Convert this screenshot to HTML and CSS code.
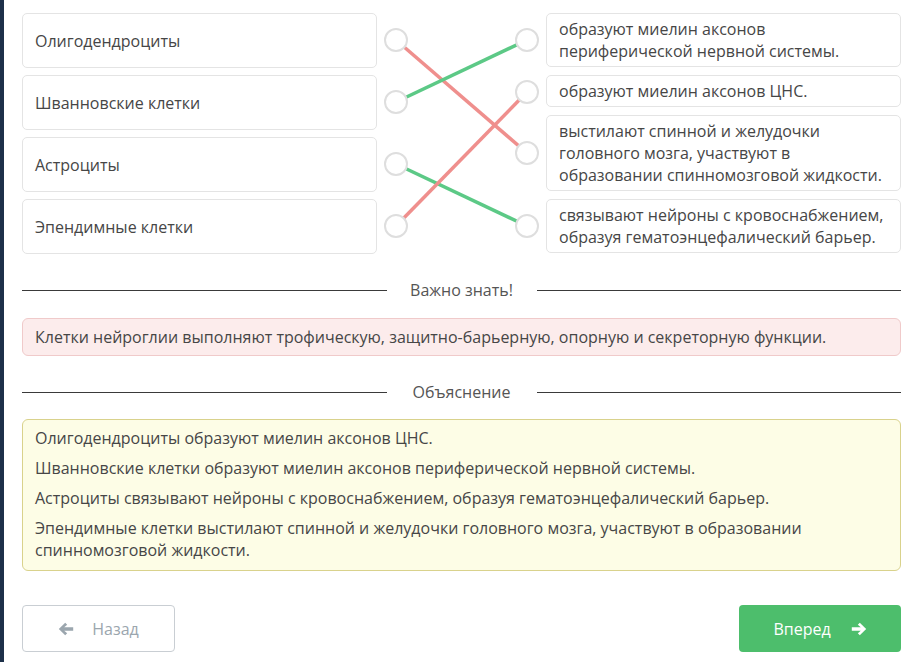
FILE: index.html
```html
<!DOCTYPE html>
<html lang="ru">
<head>
  <meta charset="UTF-8" />
  <meta name="viewport" content="width=device-width, initial-scale=1.0" />
  <title>Нейроглия</title>
  <link rel="stylesheet" href="styles.css">
</head>
<body>
  <div id="page">
    <div id="matchArea">
      <div class="column left-col">
        <div class="item">Олигодендроциты</div>
        <div class="item">Шванновские клетки</div>
        <div class="item">Астроциты</div>
        <div class="item">Эпендимные клетки</div>
      </div>

      <svg class="links" width="169" height="241" viewBox="0 0 169 241">
        <line class="bad" x1="19" y1="27" x2="150" y2="140" />
        <line class="good" x1="19" y1="89" x2="150" y2="27" />
        <line class="good" x1="19" y1="151" x2="150" y2="213" />
        <line class="bad" x1="19" y1="213" x2="150" y2="79" />
        <circle cx="19" cy="27" r="11" />
        <circle cx="19" cy="89" r="11" />
        <circle cx="19" cy="151" r="11" />
        <circle cx="19" cy="213" r="11" />
        <circle cx="150" cy="27" r="11" />
        <circle cx="150" cy="79" r="11" />
        <circle cx="150" cy="140" r="11" />
        <circle cx="150" cy="213" r="11" />
      </svg>

      <div class="column right-col">
        <div class="item">образуют миелин аксонов периферической нервной системы.</div>
        <div class="item">образуют миелин аксонов ЦНС.</div>
        <div class="item">выстилают спинной и желудочки головного мозга, участвуют в образовании спинномозговой жидкости.</div>
        <div class="item">связывают нейроны с кровоснабжением, образуя гематоэнцефалический барьер.</div>
      </div>
    </div>

    <div class="divider">
      <span class="rule"></span>
      <span class="divider-title">Важно знать!</span>
      <span class="rule"></span>
    </div>

    <div class="note">Клетки нейроглии выполняют трофическую, защитно-барьерную, опорную и секреторную функции.</div>

    <div class="divider">
      <span class="rule"></span>
      <span class="divider-title">Объяснение</span>
      <span class="rule"></span>
    </div>

    <div class="explain">
      <p>Олигодендроциты образуют миелин аксонов ЦНС.</p>
      <p>Шванновские клетки образуют миелин аксонов периферической нервной системы.</p>
      <p>Астроциты связывают нейроны с кровоснабжением, образуя гематоэнцефалический барьер.</p>
      <p>Эпендимные клетки выстилают спинной и желудочки головного мозга, участвуют в образовании спинномозговой жидкости.</p>
    </div>

    <div id="nav">
      <button class="nav-btn back">
        <svg width="16" height="14" viewBox="0 0 16 14"><path d="M7.2 0.8 L9.2 2.8 L6.2 5.2 H15.2 V8.8 H6.2 L9.2 11.2 L7.2 13.2 L0.8 7 Z" /></svg>
        Назад
      </button>
      <button class="nav-btn next">
        Вперед
        <svg width="16" height="14" viewBox="0 0 16 14"><path d="M8.8 0.8 L6.8 2.8 L9.8 5.2 H0.8 V8.8 H9.8 L6.8 11.2 L8.8 13.2 L15.2 7 Z" /></svg>
      </button>
    </div>
  </div>
</body>
</html>
```

FILE: styles.css
```css
body {
  margin: 0;
  background-color: #fff;
  font-family: "Open Sans", "Liberation Sans", sans-serif;
  font-size: 16px;
  line-height: 22px;
  color: #464646;
  height: 100vh;
  overflow: hidden;
}

#page {
  border-left: 4px solid #1d3049;
  padding: 13px 7px 0 18px;
  min-height: 100vh;
  box-sizing: border-box;
}

#matchArea {
  display: flex;
  align-items: stretch;
}

.column {
  width: 355px;
  display: flex;
  flex-direction: column;
}

.left-col {
  gap: 7px;
}

.right-col {
  gap: 8px;
}

.item {
  background-color: #fff;
  border: 1px solid #e4e4e4;
  border-radius: 5px;
  padding: 4px 12px;
}

.left-col .item {
  flex: 1;
  display: flex;
  align-items: center;
  padding-top: 0;
  padding-bottom: 0;
}

.links {
  flex-shrink: 0;
  display: block;
}

.links line {
  stroke-width: 3.5;
  stroke-linecap: butt;
}

.links .bad {
  stroke: #ef8f8d;
}

.links .good {
  stroke: #5cc986;
}

.links circle {
  fill: #fff;
  stroke: #dedede;
  stroke-width: 2;
}

.divider {
  display: flex;
  align-items: center;
  margin-top: 25px;
}

.rule {
  flex: 1;
  height: 1px;
  background-color: #3a3a3a;
}

.divider-title {
  width: 150px;
  text-align: center;
  color: #555;
}

.note {
  margin-top: 17px;
  padding: 7px 12px;
  background-color: #fcecec;
  border: 1px solid #f0caca;
  border-radius: 6px;
}

.explain {
  margin-top: 16px;
  padding: 7px 12px 9px;
  background-color: #fdfde6;
  border: 1px solid #d9d28c;
  border-radius: 6px;
}

.explain p {
  margin: 0 0 8px;
}

.explain p:last-child {
  margin-bottom: 0;
}

#nav {
  display: flex;
  justify-content: space-between;
  margin-top: 34px;
}

.nav-btn {
  height: 47px;
  border-radius: 4px;
  font-family: inherit;
  font-size: 16px;
  display: flex;
  align-items: center;
  justify-content: center;
  gap: 18px;
  cursor: pointer;
}

.back {
  width: 153px;
  background-color: #fff;
  border: 1px solid #c9ced3;
  color: #9ba6ae;
}

.back svg path {
  fill: #9ba6ae;
}

.next {
  width: 162px;
  background-color: #4dbe6c;
  border: none;
  color: #fff;
  gap: 20px;
}

.next svg path {
  fill: #fff;
}
```
